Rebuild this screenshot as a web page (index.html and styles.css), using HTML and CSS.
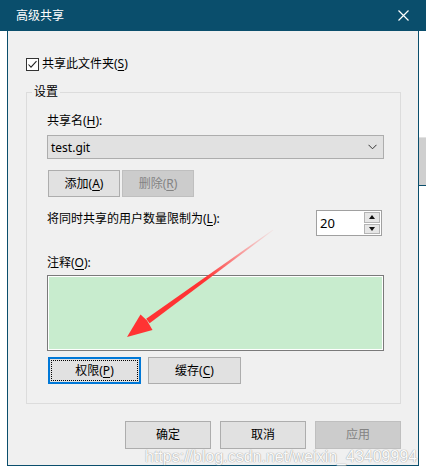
FILE: index.html
```html
<!DOCTYPE html>
<html lang="zh-CN">
<head>
    <meta charset="UTF-8">
    <meta name="viewport" content="width=device-width, initial-scale=1.0">
    <title>高级共享</title>
    <link rel="stylesheet" href="styles.css">
</head>
<body>

    <div class="titlebar">
        <span class="title">高级共享</span>
        <svg class="close" width="11" height="11" viewBox="0 0 11 11">
            <path d="M0.5 0.5 L10.5 10.5 M10.5 0.5 L0.5 10.5" stroke="#fff" stroke-width="1.2" fill="none"/>
        </svg>
    </div>

    <div class="main">
        <div class="gutter"></div>

        <div class="dialog">
            <div class="check-row">
                <span class="checkbox">
                    <svg width="11" height="11" viewBox="0 0 11 11">
                        <polyline points="1.5,5.5 4,8.2 9.5,2.2" stroke="#222" stroke-width="1.1" fill="none"/>
                    </svg>
                </span>
                <span>共享此文件夹(<u>S</u>)</span>
            </div>

            <fieldset class="group">
                <legend>设置</legend>
                <div class="group-body">
                    <div class="field-label">共享名(<u>H</u>):</div>
                    <div class="combo">
                        <span>test.git</span>
                        <svg width="9" height="6" viewBox="0 0 9 6">
                            <polyline points="0.5,0.8 4.5,4.8 8.5,0.8" stroke="#333" stroke-width="1" fill="none"/>
                        </svg>
                    </div>

                    <div class="btn-row small">
                        <div class="btn">添加(<u>A</u>)</div>
                        <div class="btn disabled">删除(<u>R</u>)</div>
                    </div>

                    <div class="limit-row">
                        <span class="limit-label">将同时共享的用户数量限制为(<u>L</u>):</span>
                        <div class="spin">
                            <span class="spin-value">20</span>
                            <div class="spin-btns">
                                <span class="spin-btn"><i class="tri up"></i></span>
                                <span class="spin-btn"><i class="tri down"></i></span>
                            </div>
                        </div>
                    </div>

                    <div class="field-label note-label">注释(<u>O</u>):</div>
                    <div class="comment"></div>

                    <div class="btn-row wide">
                        <div class="btn focused"><span class="focus-ring">权限(<u>P</u>)</span></div>
                        <div class="btn">缓存(<u>C</u>)</div>
                    </div>
                </div>
            </fieldset>

            <div class="footer">
                <div class="btn">确定</div>
                <div class="btn">取消</div>
                <div class="btn disabled">应用</div>
            </div>
        </div>

        <div class="aside">
            <div class="aside-block"></div>
        </div>
    </div>

    <div class="watermark">https://blog.csdn.net/weixin_43409994</div>

    <!-- red pointer drawn over the dialog -->
    <svg class="arrow" width="426" height="473" viewBox="0 0 426 473">
        <defs>
            <linearGradient id="shaft" gradientUnits="userSpaceOnUse" x1="274" y1="229" x2="205" y2="279">
                <stop offset="0" stop-color="#ff5a5a" stop-opacity="0.05"/>
                <stop offset="1" stop-color="#ff3333" stop-opacity="1"/>
            </linearGradient>
        </defs>
        <polygon points="273.3,230.2 272.7,229.8 146.2,318.8 149.6,323.2" fill="url(#shaft)"/>
        <polygon points="127,337 140.5,314.5 147,320.5 152.5,330" fill="#ff3333"/>
    </svg>

</body>
</html>
```

FILE: styles.css
```css
*{
    box-sizing: border-box;
}

body{
    margin: 0;
    width: 426px;
    height: 473px;
    background: #fff;
    font-family: "Noto Sans", "Noto Sans CJK SC", sans-serif;
    font-size: 12px;
    color: #000;
    position: relative;
    overflow: hidden;
}

u{
    text-decoration-thickness: 1px;
    text-underline-offset: 2px;
}

.titlebar{
    height: 31px;
    background-color: #0a4e6c;
    display: flex;
    align-items: center;
    justify-content: space-between;
    padding: 0 17px 0 16px;
}
.title{
    color: #fff;
    font-size: 12px;
    line-height: 16px;
}

.main{
    display: flex;
}
.gutter{
    width: 7px;
}
.dialog{
    width: 412px;
    height: 435px;
    background-color: #f0f0f0;
    border: 1px solid #0a4e6c;
    border-top: none;
    padding-top: 25px;
}
.aside{
    width: 7px;
    padding-top: 106px;
}
.aside-block{
    height: 49px;
    background-color: #cfcfcf;
    border-top: 1px solid #e2e2e2;
    border-bottom: 1px solid #0a4e6c;
}

.check-row{
    display: flex;
    align-items: center;
    height: 16px;
    line-height: 16px;
    margin-left: 18px;
    gap: 3px;
}
.checkbox{
    width: 13px;
    height: 13px;
    border: 1px solid #333;
    background: #fff;
    display: flex;
}

.group{
    margin: 12px 17px 0 18px;
    padding: 0;
    border: 1px solid #dcdcdc;
    min-inline-size: 0;
}
.group legend{
    margin-left: 5px;
    padding: 0 2px;
    line-height: 16px;
}
.group-body{
    padding: 13px 16px 19px 20px;
}

.field-label{
    line-height: 16px;
}

.combo{
    margin-top: 6px;
    height: 24px;
    background-color: #e1e1e1;
    border: 1px solid #adadad;
    display: flex;
    align-items: center;
    justify-content: space-between;
    padding: 0 6px 0 3px;
}

.btn-row{
    display: flex;
    margin-left: 1px;
}
.btn-row.small{
    margin-top: 11px;
    gap: 2px;
}
.btn-row.small .btn{
    width: 72px;
    height: 27px;
}
.btn-row.wide{
    margin-top: 6px;
    gap: 7px;
}
.btn-row.wide .btn{
    width: 93px;
    height: 27px;
}

.btn{
    background-color: #e1e1e1;
    border: 1px solid #adadad;
    display: flex;
    align-items: center;
    justify-content: center;
    line-height: 16px;
}
.btn.disabled{
    background-color: #cccccc;
    border-color: #bfbfbf;
    color: #838383;
}
.btn.focused{
    border: 2px solid #0078d7;
    padding: 1px;
}
.focus-ring{
    flex: 1;
    align-self: stretch;
    border: 1px dotted #000;
    display: flex;
    align-items: center;
    justify-content: center;
}

.limit-row{
    margin-top: 13px;
    display: flex;
    justify-content: space-between;
    align-items: flex-start;
}
.limit-label{
    margin-top: 1px;
    line-height: 16px;
}
.spin{
    width: 66px;
    height: 26px;
    margin-right: 2px;
    border: 1px solid #a0a0a0;
    background: #fff;
    display: flex;
}
.spin-value{
    flex: 1;
    padding-left: 3px;
    font-size: 13px;
    line-height: 24px;
}
.spin-btns{
    width: 17px;
    display: flex;
    flex-direction: column;
    gap: 1px;
    padding: 1px 1px 1px 0;
}
.spin-btn{
    flex: 1;
    background-color: #e6e6e6;
    border: 1px solid #b4b4b4;
    display: flex;
    align-items: center;
    justify-content: center;
}
.tri{
    width: 0;
    height: 0;
    border-left: 3.5px solid transparent;
    border-right: 3.5px solid transparent;
}
.tri.up{
    border-bottom: 4px solid #111;
}
.tri.down{
    border-top: 4px solid #111;
}

.note-label{
    margin-top: 19px;
}
.comment{
    margin-top: 4px;
    height: 76px;
    background-color: #c8ecce;
    border: 1px solid #7a7a7a;
    box-shadow: inset 0 0 0 1px #fff;
}

.footer{
    margin-top: 17px;
    display: flex;
    justify-content: flex-end;
    gap: 9px;
    padding-right: 17px;
}
.footer .btn{
    width: 86px;
    height: 28px;
}

.watermark{
    position: absolute;
    left: 145px;
    top: 447px;
    font-family: "Liberation Sans", Arial, sans-serif;
    font-size: 16px;
    line-height: 20px;
    color: #fafafa;
    text-shadow: 0 0 1px #9a9a9a, 0 0 1px #b0b0b0;
    white-space: nowrap;
}

.arrow{
    position: absolute;
    left: 0;
    top: 0;
    pointer-events: none;
}
```
